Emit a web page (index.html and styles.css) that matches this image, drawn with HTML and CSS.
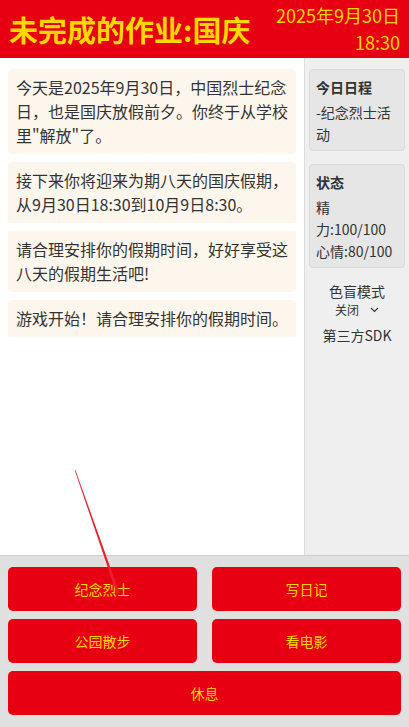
FILE: index.html
```html
<!DOCTYPE html>
<html lang="zh-CN">
<head>
<meta charset="utf-8">
<title>未完成的作业:国庆</title>
<link rel="stylesheet" href="styles.css">
</head>
<body>
<div class="app">
  <header class="topbar">
    <h1 class="title">未完成的作业:国庆</h1>
    <div class="datetime">
      <div>2025年9月30日</div>
      <div>18:30</div>
    </div>
  </header>
  <main class="content">
    <section class="log">
      <div class="msg">今天是2025年9月30日，中国烈士纪念日，也是国庆放假前夕。你终于从学校里"解放"了。</div>
      <div class="msg">接下来你将迎来为期八天的国庆假期，从9月30日18:30到10月9日8:30。</div>
      <div class="msg">请合理安排你的假期时间，好好享受这八天的假期生活吧!</div>
      <div class="msg">游戏开始！请合理安排你的假期时间。</div>
    </section>
    <aside class="side">
      <div class="panel">
        <div class="panel-title">今日日程</div>
        <div class="panel-body">-纪念烈士活动</div>
      </div>
      <div class="panel">
        <div class="panel-title">状态</div>
        <div class="panel-body">精力:100/100<br>心情:80/100</div>
      </div>
      <div class="cb">
        <div class="cb-label">色盲模式</div>
        <div class="cb-select">关闭 <svg class="chev" width="9" height="6" viewBox="0 0 9 6"><path d="M1 1 L4.5 4.5 L8 1" fill="none" stroke="#333" stroke-width="1.1"/></svg></div>
      </div>
      <div class="sdk">第三方SDK</div>
    </aside>
  </main>
  <footer class="actions">
    <button class="btn">纪念烈士</button>
    <button class="btn">写日记</button>
    <button class="btn">公园散步</button>
    <button class="btn">看电影</button>
    <button class="btn wide">休息</button>
  </footer>
  <svg class="pointer" width="409" height="727" viewBox="0 0 409 727">
    <polygon points="74.6,470 75.4,470 119.5,593 116.5,593" fill="#e8202a"/>
  </svg>
</div>
</body>
</html>
```
FILE: styles.css
```css
* { box-sizing: border-box; }
html, body {
  margin: 0;
  padding: 0;
}
body {
  font-family: "Noto Sans CJK SC", "Noto Sans", sans-serif;
  color: #333;
  background: #fff;
}
.app {
  position: relative;
  width: 409px;
  height: 727px;
  display: flex;
  flex-direction: column;
  overflow: hidden;
}
.topbar {
  height: 58px;
  flex: none;
  background: #e60012;
  color: #ffd700;
  display: flex;
  align-items: center;
  justify-content: space-between;
  padding: 0 9px;
}
.title {
  margin: 0;
  font-size: 29px;
  font-weight: 700;
  line-height: 1;
  padding-top: 1px;
}
.datetime {
  text-align: right;
  font-size: 18px;
  line-height: 27px;
}
.content {
  flex: 1;
  display: flex;
  min-height: 0;
}
.log {
  width: 304px;
  flex: none;
  padding: 11px 8px;
  display: flex;
  flex-direction: column;
  gap: 8px;
}
.msg {
  background: #fdf6ec;
  border-radius: 4px;
  padding: 6px 8px 7px;
  font-size: 16px;
  line-height: 24px;
  color: #333;
}
.side {
  flex: 1;
  background: #efefef;
  border-left: 1px solid #dcdcdc;
  padding: 11px 4px;
  display: flex;
  flex-direction: column;
  gap: 13px;
}
.panel {
  background: #e6e6e6;
  border: 1px solid #dadada;
  border-radius: 4px;
  padding: 6px 6px 5px;
  font-size: 14px;
  line-height: 22px;
  color: #333;
}
.panel-title {
  font-weight: 700;
  font-size: 14px;
  line-height: 22px;
  margin-bottom: 3px;
}
.cb {
  text-align: center;
  margin-top: 1px;
}
.cb-label {
  font-size: 14px;
  line-height: 19px;
}
.cb-select {
  font-size: 12px;
  line-height: 17px;
  display: flex;
  justify-content: center;
  align-items: center;
  gap: 11px;
}
.sdk {
  text-align: center;
  font-size: 14px;
  line-height: 20px;
  margin-top: -6px;
}
.actions {
  flex: none;
  background: #e0e0e0;
  border-top: 1px solid #cdcdcd;
  padding: 11px 8px 12px;
  display: grid;
  grid-template-columns: 1fr 1fr;
  column-gap: 15px;
  row-gap: 8px;
}
.btn {
  height: 44px;
  border: none;
  border-radius: 5px;
  background: #e60012;
  color: #ffd700;
  font-family: "Noto Sans CJK SC", "Noto Sans", sans-serif;
  font-size: 14px;
  padding: 0;
}
.btn.wide {
  grid-column: 1 / 3;
}
.pointer {
  position: absolute;
  left: 0;
  top: 0;
  pointer-events: none;
}
```
